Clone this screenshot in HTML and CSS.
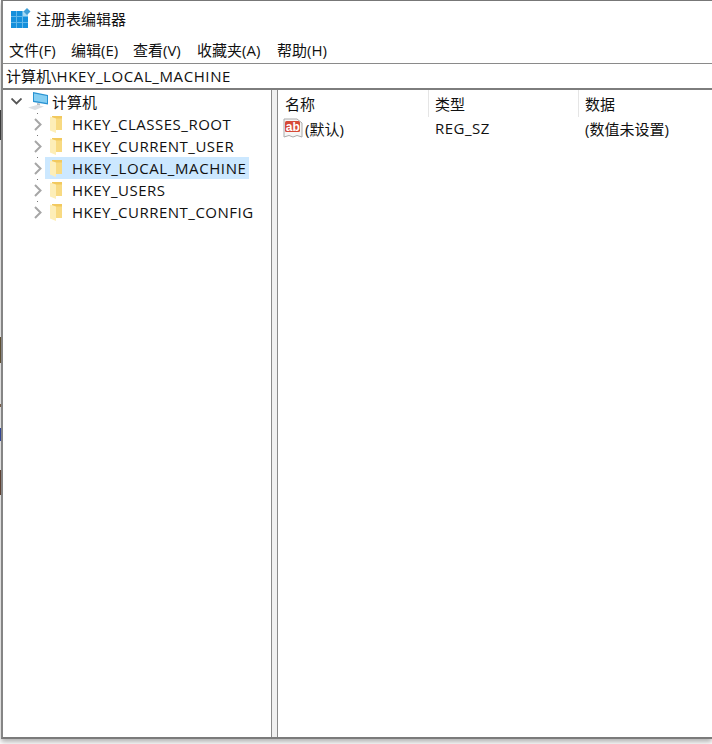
FILE: index.html
```html
<!DOCTYPE html>
<html lang="zh-CN">

<head>
    <meta charset="UTF-8">
    <meta name="viewport" content="width=device-width, initial-scale=1.0">
    <title>注册表编辑器</title>
    <link rel="stylesheet" href="styles.css">
</head>

<body>

    <div class="backdrop"></div>

    <div class="window">
        <div class="titlebar">
            <svg class="app-icon" width="20" height="20" viewBox="0 0 20 20">
                <rect x="0" y="3" width="17" height="17" fill="#1590dc"/>
                <path d="M0 8.500h17M0 14.500h17M5.500 3v17M11.500 3v17" stroke="#62b8ea" stroke-width="1"/>
                <rect x="12" y="3" width="5" height="5" fill="#a5d8f3"/>
                <path d="M16 0l3.500 3.500-3.500 3.500-3.500-3.500z" fill="#3f9fd8"/>
            </svg>
            <span>注册表编辑器</span>
        </div>

        <div class="menubar">
            <span class="menu-file">文件(F)</span>
            <span class="menu-edit">编辑(E)</span>
            <span class="menu-view">查看(V)</span>
            <span class="menu-fav">收藏夹(A)</span>
            <span>帮助(H)</span>
        </div>

        <div class="address"><span>计算机\<span class="latin address-key">HKEY_LOCAL_MACHINE</span></span></div>

        <div class="panes">
            <div class="tree">
                <div class="tree-root">
                    <svg class="chevron" width="11" height="7" viewBox="0 0 11 7"><path d="M0.500 0.500l5 5 5-5" fill="none" stroke="#555" stroke-width="1.800"/></svg>
                    <svg class="pc-icon" width="20" height="18" viewBox="0 0 20 18">
                        <path d="M5 0l15 3v9.500L5 10z" fill="#2a93d2"/>
                        <path d="M6 1.500l13 2.500v7L6 8.800z" fill="#86cff3"/>
                        <path d="M9 11l3 .5v2l-3-.3z" fill="#b9bec4"/>
                        <path d="M0 15.500l9-2.500 7 1.500-9 3.500z" fill="#dcdfe3"/>
                    </svg>
                    <span>计算机</span>
                </div>
                <div class="tree-row">
                    <svg class="chevron-right" width="8" height="13" viewBox="0 0 8 13"><path d="M1 1l5.500 5.500-5.500 5.500" fill="none" stroke="#a6a6a6" stroke-width="2"/></svg>
                    <div class="tree-item">
                        <svg class="folder" width="14" height="18" viewBox="0 0 14 18"><path d="M3 1h10v14H3z" fill="#f2c95e"/><path d="M7 3.500h6v11.500H7z" fill="#f8da82"/><path d="M1 1.500l6 2V18l-6-2.500z" fill="#fdeeb8"/></svg>
                        <span class="latin">HKEY_CLASSES_ROOT</span>
                    </div>
                </div>
                <div class="tree-row">
                    <svg class="chevron-right" width="8" height="13" viewBox="0 0 8 13"><path d="M1 1l5.500 5.500-5.500 5.500" fill="none" stroke="#a6a6a6" stroke-width="2"/></svg>
                    <div class="tree-item">
                        <svg class="folder" width="14" height="18" viewBox="0 0 14 18"><path d="M3 1h10v14H3z" fill="#f2c95e"/><path d="M7 3.500h6v11.500H7z" fill="#f8da82"/><path d="M1 1.500l6 2V18l-6-2.500z" fill="#fdeeb8"/></svg>
                        <span class="latin">HKEY_CURRENT_USER</span>
                    </div>
                </div>
                <div class="tree-row">
                    <svg class="chevron-right" width="8" height="13" viewBox="0 0 8 13"><path d="M1 1l5.500 5.500-5.500 5.500" fill="none" stroke="#a6a6a6" stroke-width="2"/></svg>
                    <div class="tree-item selected">
                        <svg class="folder" width="14" height="18" viewBox="0 0 14 18"><path d="M3 1h10v14H3z" fill="#f2c95e"/><path d="M7 3.500h6v11.500H7z" fill="#f8da82"/><path d="M1 1.500l6 2V18l-6-2.500z" fill="#fdeeb8"/></svg>
                        <span class="latin address-key">HKEY_LOCAL_MACHINE</span>
                    </div>
                </div>
                <div class="tree-row">
                    <svg class="chevron-right" width="8" height="13" viewBox="0 0 8 13"><path d="M1 1l5.500 5.500-5.500 5.500" fill="none" stroke="#a6a6a6" stroke-width="2"/></svg>
                    <div class="tree-item">
                        <svg class="folder" width="14" height="18" viewBox="0 0 14 18"><path d="M3 1h10v14H3z" fill="#f2c95e"/><path d="M7 3.500h6v11.500H7z" fill="#f8da82"/><path d="M1 1.500l6 2V18l-6-2.500z" fill="#fdeeb8"/></svg>
                        <span class="latin">HKEY_USERS</span>
                    </div>
                </div>
                <div class="tree-row">
                    <svg class="chevron-right" width="8" height="13" viewBox="0 0 8 13"><path d="M1 1l5.500 5.500-5.500 5.500" fill="none" stroke="#a6a6a6" stroke-width="2"/></svg>
                    <div class="tree-item">
                        <svg class="folder" width="14" height="18" viewBox="0 0 14 18"><path d="M3 1h10v14H3z" fill="#f2c95e"/><path d="M7 3.500h6v11.500H7z" fill="#f8da82"/><path d="M1 1.500l6 2V18l-6-2.500z" fill="#fdeeb8"/></svg>
                        <span class="latin">HKEY_CURRENT_CONFIG</span>
                    </div>
                </div>
            </div>

            <div class="splitter"></div>

            <div class="list">
                <div class="list-head">
                    <div class="col col-name">名称</div>
                    <div class="col col-type">类型</div>
                    <div class="col col-data">数据</div>
                </div>
                <div class="list-row">
                    <div class="col-name value-name">
                        <svg class="ab-icon" width="20" height="20" viewBox="0 0 20 20">
                            <path d="M1 1h13l5 4v14l-5-1.500-4 1.500-4-1.500-5 1.500z" fill="#f6f6f6" stroke="#ababab" stroke-width="1"/>
                            <rect x="2" y="3" width="15" height="11" rx="1.500" fill="#d64a38"/>
                            <text x="2.800" y="12.500" class="ab-text">ab</text>
                        </svg>
                        <span>(默认)</span>
                    </div>
                    <div class="col-type cell latin">REG_SZ</div>
                    <div class="col-data cell">(数值未设置)</div>
                </div>
            </div>
        </div>
    </div>

</body>

</html>
```

FILE: styles.css
```css
html, body {
    height: 744px;
    overflow: hidden;
}

body {
    margin: 0;
    background: #fff;
    font-family: 'Open Sans', 'Noto Sans CJK SC', sans-serif;
    font-size: 15px;
    color: #111;
}

/* trozos de las ventanas de detras, asoman por el borde izquierdo */
.backdrop {
    position: absolute;
    left: 0;
    top: 0;
    width: 1px;
    height: 739px;
    background: linear-gradient(to bottom,
        #fff 110px, #444 110px, #444 140px, #fff 140px,
        #fff 337px, #6b5a3a 337px, #6b5a3a 363px, #fff 363px,
        #fff 404px, #8a6d55 404px, #8a6d55 407px, #fff 407px,
        #fff 428px, #3a4fa8 428px, #3a4fa8 441px, #fff 441px,
        #fff 470px, #6b4a3a 470px, #6b4a3a 495px, #fff 495px);
}

.window {
    box-sizing: border-box;
    position: relative;
    display: flex;
    flex-direction: column;
    height: 739px;
    margin-left: 1px;
    background: #fff;
    border-top: 1px solid #777;
    border-left: 2px solid #858585;
    border-bottom: 2px solid #7b7b7b;
    box-shadow: 0 3px 5px rgba(0, 0, 0, 0.3);
}

.titlebar {
    box-sizing: border-box;
    display: flex;
    align-items: center;
    height: 36px;
    padding: 0 0 2px 8px;
    gap: 5px;
}

.app-icon {
    flex: none;
}

.menubar {
    display: flex;
    align-items: center;
    height: 27px;
    padding-left: 6px;
    padding-bottom: 2px;
    background: #fff;
    border-bottom: 1px solid #8a8a8a;
    box-sizing: border-box;
}

.menu-file { width: 62px; }
.menu-edit { width: 62px; }
.menu-view { width: 64px; }
.menu-fav { width: 80px; }

.address {
    box-sizing: border-box;
    height: 26px;
    padding: 0 0 1px 3px;
    display: flex;
    align-items: center;
    border-bottom: 2px solid #7d7d7d;
}

.latin {
    letter-spacing: 0.5px;
}

.latin.address-key {
    letter-spacing: 0.6px;
}

.panes {
    flex: 1;
    display: flex;
    min-height: 0;
}

.tree {
    box-sizing: border-box;
    width: 268px;
    padding-top: 1px;
}

.tree-root {
    box-sizing: border-box;
    display: flex;
    align-items: center;
    height: 22px;
    padding: 0 0 2px 8px;
}

.chevron {
    flex: none;
    margin-right: 6px;
}

.pc-icon {
    flex: none;
    margin-right: 4px;
}

.tree-row {
    position: relative;
    display: flex;
    align-items: center;
    height: 22px;
    padding-left: 31px;
}

/* puntos de las lineas del arbol */
.tree-row::before {
    content: "";
    position: absolute;
    left: 34px;
    top: 0;
    width: 1px;
    height: 1px;
    background: #777;
}

.chevron-right {
    flex: none;
    margin-right: 3px;
}

.tree-item {
    display: flex;
    align-items: center;
    height: 22px;
    padding: 0 3px 0 4px;
    gap: 9px;
}

.tree-item.selected {
    background: #cce8ff;
}

.folder {
    flex: none;
}

.splitter {
    box-sizing: border-box;
    width: 7px;
    background: #f0f0f0;
    border-left: 1px solid #8a8a8a;
    border-right: 1px solid #8a8a8a;
}

.list {
    flex: 1;
    min-width: 0;
}

.list-head {
    display: flex;
    height: 27px;
}

.col {
    box-sizing: border-box;
    display: flex;
    align-items: center;
    height: 27px;
    padding-left: 7px;
    padding-bottom: 1px;
    border-right: 1px solid #e5e5e5;
}

.col-name {
    width: 151px;
    flex: none;
}

.col-type {
    width: 150px;
    flex: none;
    padding-left: 6px;
}

.col-data {
    flex: 1;
    border-right: none;
    padding-left: 6px;
}

.list-row {
    display: flex;
    align-items: center;
    height: 22px;
}

.value-name {
    display: flex;
    align-items: center;
    gap: 2px;
    padding-left: 5px;
    box-sizing: border-box;
}

.cell {
    box-sizing: border-box;
    padding-left: 6px;
}

.ab-icon {
    flex: none;
}

.ab-text {
    font-family: 'Liberation Sans', sans-serif;
    font-size: 12px;
    font-weight: bold;
    letter-spacing: 0;
    fill: #fff;
}
```
